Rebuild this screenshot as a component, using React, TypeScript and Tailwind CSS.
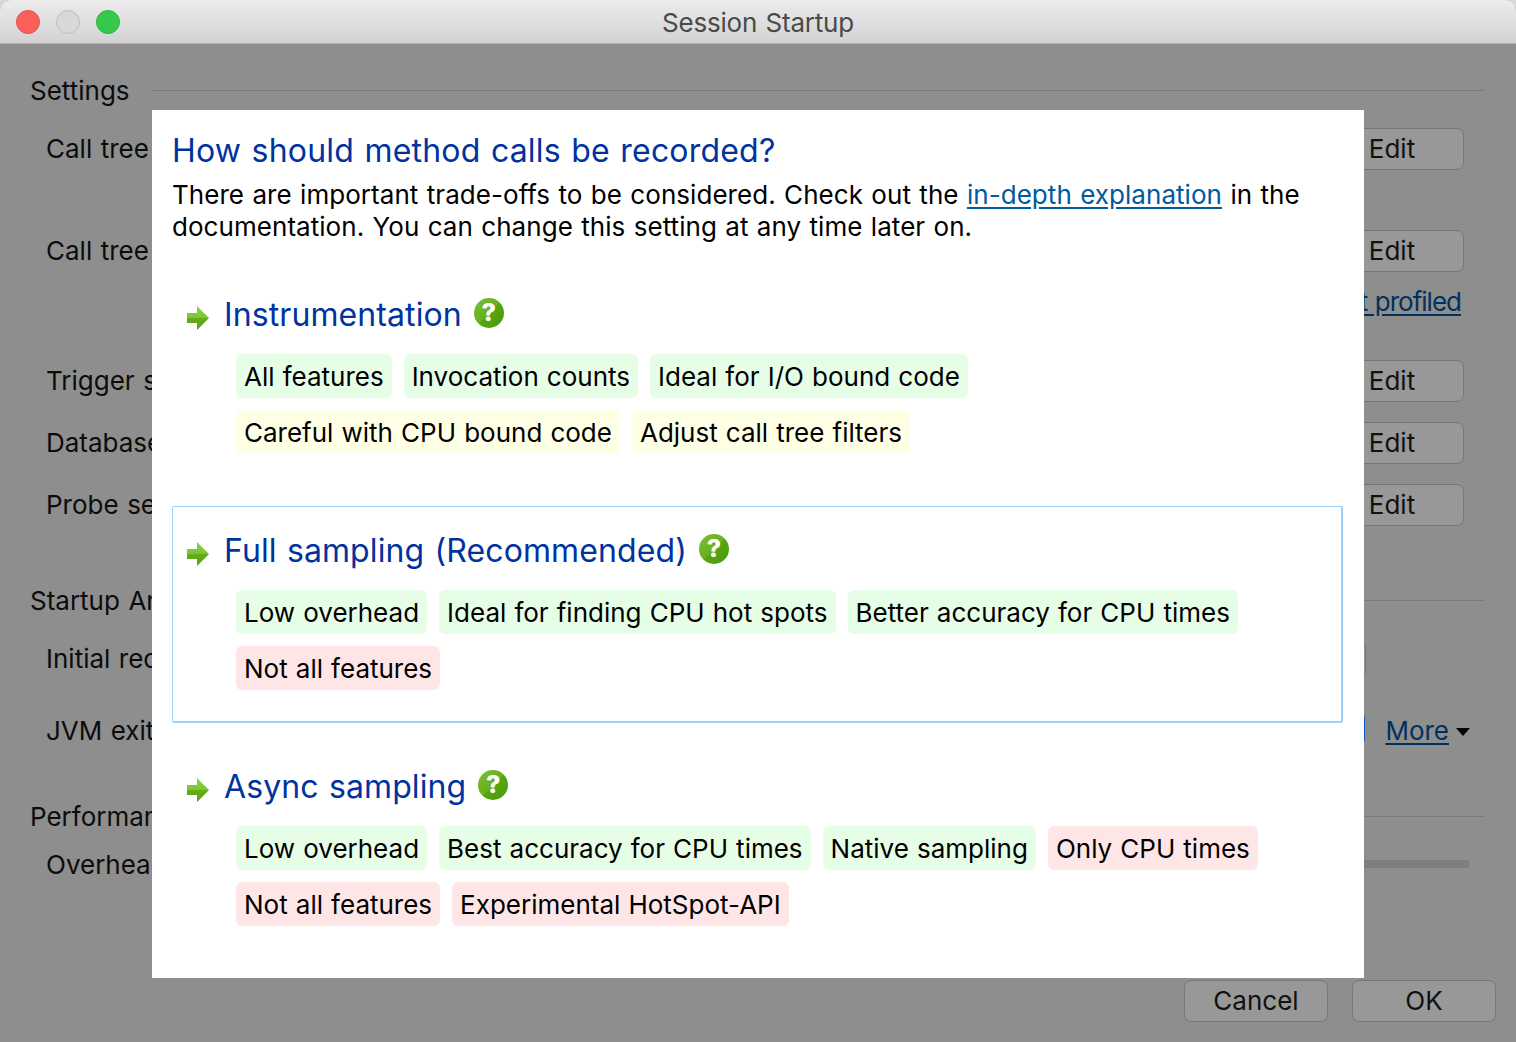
import React from 'react'

type Tone = 'good' | 'warn' | 'bad'

const chipTone: Record<Tone, string> = {
  good: 'bg-[#e6fde6]',
  warn: 'bg-[#ffffe6]',
  bad: 'bg-[#ffe6e6]',
}

const Chip = ({ tone, children }: { tone: Tone; children: string }) => (
  <span className={`flex h-[44px] items-center rounded-[6px] px-[8px] text-[26px] text-black [word-spacing:0.8px] ${chipTone[tone]}`}>
    {children}
  </span>
)

const Arrow = () => (
  <svg width="24" height="24" viewBox="0 0 24 24" className="shrink-0">
    <defs>
      <linearGradient id="arrowFill" x1="0" y1="0" x2="0" y2="1">
        <stop offset="0" stopColor="#8ad544" />
        <stop offset="0.5" stopColor="#79c52f" />
        <stop offset="0.52" stopColor="#63ad18" />
        <stop offset="1" stopColor="#5b9f12" />
      </linearGradient>
    </defs>
    <path d="M1 7h10V0l12 12-12 12v-7H1z" fill="url(#arrowFill)" />
  </svg>
)

const Help = () => (
  <span className="flex h-[30px] w-[30px] items-center justify-center rounded-full bg-[linear-gradient(135deg,#7cbf30_0%,#68b01f_50%,#57a50e_51%,#4e9a0c_100%)] text-[25px] font-extrabold leading-none text-white">
    ?
  </span>
)

const Option = ({
  title,
  selected,
  rows,
}: {
  title: string
  selected?: boolean
  rows: { tone: Tone; label: string }[][]
}) => (
  <div className={`h-[217px] rounded-[2px] border border-r-2 border-b-2 pl-[13px] pt-[21px] ${selected ? 'border-[#99d1ff]' : 'border-transparent'}`}>
    <div className="flex h-[44px] items-center">
      <span className="mt-[7px]">
        <Arrow />
      </span>
      <h2 className="ml-[14px] mt-[2px] text-[32px] leading-none tracking-[0.1px] text-[#0033a0] [word-spacing:1.2px]">{title}</h2>
      <span className="-mt-[3px] ml-[12px]">
        <Help />
      </span>
    </div>
    <div className="ml-[50px] mt-[18px] flex flex-col gap-[12px]">
      {rows.map((row, i) => (
        <div key={i} className="flex gap-[12px]">
          {row.map((chip) => (
            <Chip key={chip.label} tone={chip.tone}>
              {chip.label}
            </Chip>
          ))}
        </div>
      ))}
    </div>
  </div>
)

const BgButton = ({ children, className = '' }: { children: string; className?: string }) => (
  <button className={`flex h-[42px] w-[144px] items-center justify-center rounded-[7px] border border-[#767676] bg-[#989898] pb-[2px] text-[26px] text-[#111] ${className}`}>
    {children}
  </button>
)

const Row = ({ label, className = '' }: { label: string; className?: string }) => (
  <div className={`flex h-[42px] items-center justify-between pl-[16px] pr-[22px] ${className}`}>
    <span className="pb-[2px]">{label}</span>
    <BgButton>Edit</BgButton>
  </div>
)

const Section = ({ label, className = '' }: { label: string; className?: string }) => (
  <div className={`flex h-[28px] items-center gap-[22px] pr-[1px] ${className}`}>
    <span className="shrink-0 pb-[2px]">{label}</span>
    <div className="-mt-[2px] h-px flex-1 bg-[#7a7a7a]" />
  </div>
)

const App = () => {
  return (
    <div className="relative h-[1042px] w-[1516px] overflow-hidden bg-[#d9d9d9] font-['Inter','Liberation_Sans',sans-serif]">
      <div className="h-full overflow-hidden rounded-t-[10px] bg-[#8e8e8e] text-[26px] text-[#0c0c0c] [word-spacing:1.2px]">
        {/* Title bar */}
        <header className="relative flex h-[44px] items-center justify-center border-b border-[#b3b3b3] bg-gradient-to-b from-[#ececec] to-[#d3d3d3]">
          <div className="absolute left-[16px] top-[10px] flex gap-[16px]">
            <span className="h-[24px] w-[24px] rounded-full border border-[#e5524e] bg-[#fc5f5a]" />
            <span className="h-[24px] w-[24px] rounded-full border border-[#bdbdbd] bg-[#d8d8d8]" />
            <span className="h-[24px] w-[24px] rounded-full border border-[#2cb43f] bg-[#33c94a]" />
          </div>
          <span className="mt-[2px] text-[26px] tracking-[-0.2px] text-[#4a4a4a]">Session Startup</span>
        </header>

        {/* Dimmed settings page */}
        <main className="pl-[30px] pr-[30px]">
          <Section label="Settings" className="mt-[33px]" />
          <Row label="Call tree recording" className="mt-[23px]" />
          <Row label="Call tree filters" className="mt-[60px]" />
          <div className="mt-[15px] flex h-[30px] items-center justify-end pr-[25px]">
            <a className="pb-[2px] tracking-[-1px] text-[#00315f] underline underline-offset-[3px]">Methods not profiled</a>
          </div>
          <Row label="Trigger settings" className="mt-[43px]" />
          <Row label="Database settings" className="mt-[20px]" />
          <Row label="Probe settings" className="mt-[20px]" />
          <Section label="Startup Analysis" className="mt-[61px]" />
          <div className="mt-[25px] flex h-[38px] items-center justify-between pl-[16px] pr-[120px]">
            <span className="pb-[2px]">Initial recording</span>
            <div className="h-[38px] w-[100px] rounded-[7px] border border-[#767676] bg-[#989898]" />
          </div>
          <div className="mt-[32px] flex h-[42px] items-center pl-[16px] pr-[16px]">
            <span className="pb-[2px]">JVM exit action</span>
            <div className="ml-auto -mt-[5px] h-[35px] w-[100px] rounded-[7px] bg-[#0f5cbf]" />
            <span className="ml-[20px] flex items-center gap-[7px]">
              <a className="pb-[2px] text-[#00315f] underline underline-offset-[3px]">More</a>
              <span className="mt-[2px] h-0 w-0 border-x-[7px] border-t-[8px] border-x-transparent border-t-black" />
            </span>
          </div>
          <Section label="Performance" className="mt-[51px]" />
          <div className="mt-[20px] flex h-[28px] items-center justify-between pl-[16px] pr-[16px]">
            <span className="pb-[2px]">Overhead</span>
            <div className="mb-[2px] h-[8px] w-[1000px] rounded-full bg-[#7f7f7f]" />
          </div>
          <div className="-mr-[10px] mt-[101px] flex justify-end gap-[24px]">
            <BgButton>Cancel</BgButton>
            <BgButton>OK</BgButton>
          </div>
        </main>
      </div>

      {/* Modal panel over the page */}
      <section className="absolute left-[152px] top-[110px] h-[868px] w-[1212px] bg-white pl-[20px] pr-[21px] pt-[21px]">
        <h1 className="text-[32px] leading-[40px] tracking-[0.2px] text-[#0033a0] [word-spacing:1.2px]">How should method calls be recorded?</h1>
        <p className="mt-[8px] text-[26px] leading-[32px] tracking-[0.05px] text-black [word-spacing:1px]">
          There are important trade-offs to be considered. Check out the{' '}
          <a className="text-[#005a9e] underline underline-offset-[3px]">in-depth explanation</a> in the
          <br />
          documentation. You can change this setting at any time later on.
        </p>
        <div className="mt-[27px] flex flex-col gap-[19px]">
          <Option
            title="Instrumentation"
            rows={[
              [
                { tone: 'good', label: 'All features' },
                { tone: 'good', label: 'Invocation counts' },
                { tone: 'good', label: 'Ideal for I/O bound code' },
              ],
              [
                { tone: 'warn', label: 'Careful with CPU bound code' },
                { tone: 'warn', label: 'Adjust call tree filters' },
              ],
            ]}
          />
          <Option
            title="Full sampling (Recommended)"
            selected
            rows={[
              [
                { tone: 'good', label: 'Low overhead' },
                { tone: 'good', label: 'Ideal for finding CPU hot spots' },
                { tone: 'good', label: 'Better accuracy for CPU times' },
              ],
              [{ tone: 'bad', label: 'Not all features' }],
            ]}
          />
          <Option
            title="Async sampling"
            rows={[
              [
                { tone: 'good', label: 'Low overhead' },
                { tone: 'good', label: 'Best accuracy for CPU times' },
                { tone: 'good', label: 'Native sampling' },
                { tone: 'bad', label: 'Only CPU times' },
              ],
              [
                { tone: 'bad', label: 'Not all features' },
                { tone: 'bad', label: 'Experimental HotSpot-API' },
              ],
            ]}
          />
        </div>
      </section>
    </div>
  )
}

export default App
